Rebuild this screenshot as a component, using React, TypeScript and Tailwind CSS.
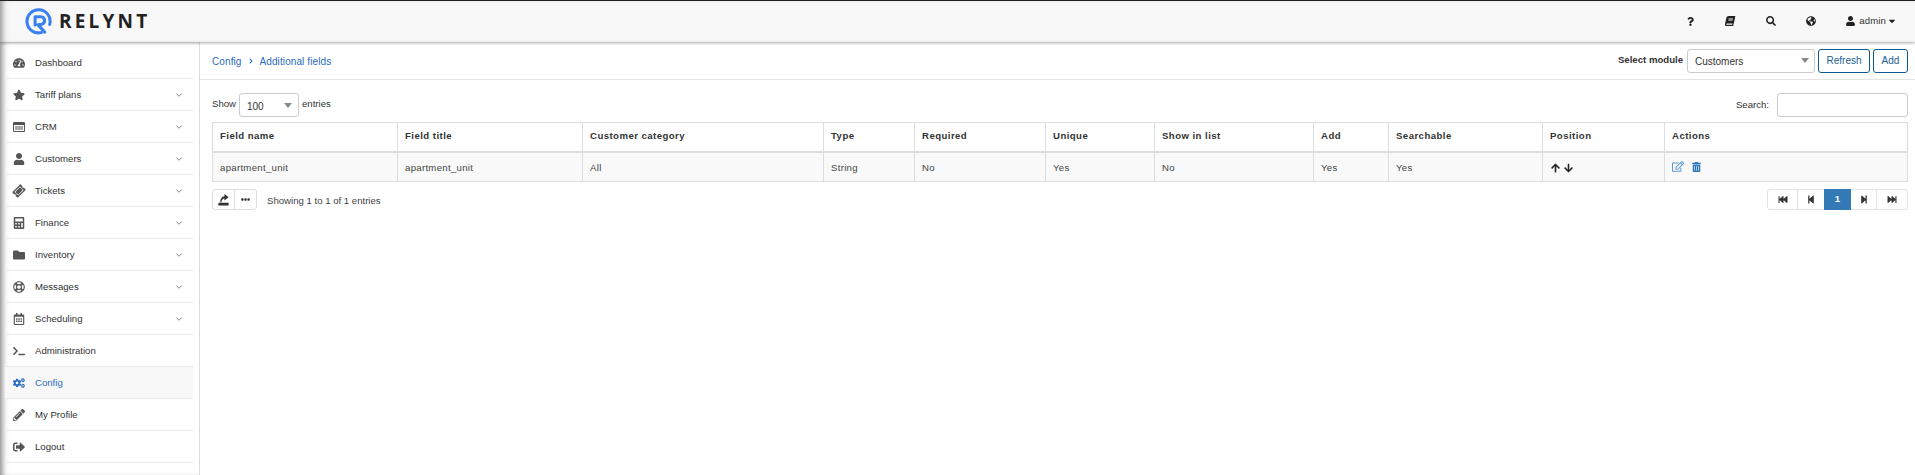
import React from "react";
import {
  FaTachometerAlt, FaStar, FaUser, FaTicketAlt, FaCalculator, FaFolder, FaRegLifeRing, FaRegCalendarAlt, FaTerminal,
  FaCogs, FaPencilAlt, FaSignOutAlt, FaQuestion, FaBook, FaSearch, FaGlobeAmericas, FaArrowUp, FaArrowDown,
  FaRegEdit, FaTrashAlt, FaFastBackward, FaStepBackward, FaStepForward, FaFastForward, FaEllipsisH, FaCaretDown, FaChevronRight,
} from "react-icons/fa";
import { LuChevronDown } from "react-icons/lu";

function Crm({ className }: { className?: string }) {
  return (
    <svg viewBox="0 0 24 20" className={className} fill="currentColor">
      <path fillRule="evenodd" d="M2 0h20a2 2 0 0 1 2 2v16a2 2 0 0 1-2 2H2a2 2 0 0 1-2-2V2a2 2 0 0 1 2-2Zm0 6v12h20V6H2Zm2 3h16v2H4V9Zm0 4h16v2H4v-2Z" />
    </svg>
  );
}

function Ticket({ className }: { className?: string }) {
  return <FaTicketAlt className={`${className} -rotate-45`} />;
}

function Logo() {
  return (
    <svg viewBox="0 0 28 28" className="w-[27px] h-[27px] shrink-0" fill="none" stroke="#3b82f0" strokeWidth="3.2">
      <path d="M17 25.4A12 12 0 1 1 25.6 17" strokeLinecap="round" />
      <path d="M10.5 17.5V9h6a4 4 0 0 1 1 7.8L13.5 17.5l7 7.5" strokeLinejoin="round" strokeLinecap="round" />
    </svg>
  );
}

function ExportIcon() {
  return (
    <svg viewBox="0 0 14 14" className="w-[13px] h-[13px] text-[#333]" fill="currentColor">
      <path d="M1.5 10.5h11v3h-11zM3.5 10c0-4 1.8-6.2 4.5-6.5V1l4.5 3.6L8 8V5.8C6 6 5 7.5 4.7 10z" />
    </svg>
  );
}

const menu: { label: string; Icon: any; chevron?: boolean; active?: boolean }[] = [
  { label: "Dashboard", Icon: FaTachometerAlt },
  { label: "Tariff plans", Icon: FaStar, chevron: true },
  { label: "CRM", Icon: Crm, chevron: true },
  { label: "Customers", Icon: FaUser, chevron: true },
  { label: "Tickets", Icon: Ticket, chevron: true },
  { label: "Finance", Icon: FaCalculator, chevron: true },
  { label: "Inventory", Icon: FaFolder, chevron: true },
  { label: "Messages", Icon: FaRegLifeRing, chevron: true },
  { label: "Scheduling", Icon: FaRegCalendarAlt, chevron: true },
  { label: "Administration", Icon: FaTerminal },
  { label: "Config", Icon: FaCogs, active: true },
  { label: "My Profile", Icon: FaPencilAlt },
  { label: "Logout", Icon: FaSignOutAlt },
];

const columns: { title: string; width: string; value: string }[] = [
  { title: "Field name", width: "w-[185px]", value: "apartment_unit" },
  { title: "Field title", width: "w-[185px]", value: "apartment_unit" },
  { title: "Customer category", width: "w-[241px]", value: "All" },
  { title: "Type", width: "w-[91px]", value: "String" },
  { title: "Required", width: "w-[131px]", value: "No" },
  { title: "Unique", width: "w-[109px]", value: "Yes" },
  { title: "Show in list", width: "w-[159px]", value: "No" },
  { title: "Add", width: "w-[75px]", value: "Yes" },
  { title: "Searchable", width: "w-[154px]", value: "Yes" },
];

function Caret() {
  return <span className="w-0 h-0 border-x-[4px] border-x-transparent border-t-[5px] border-t-[#888]" />;
}

export default function App() {
  return (
    <div className="h-[475px] w-full overflow-hidden bg-white flex flex-col text-[#333] font-['Liberation_Sans',Arial,sans-serif] text-[9.6px] border-t border-t-[#222]">
      <header className="relative z-10 h-[41px] shrink-0 flex items-center justify-between bg-[#f8f8f8] shadow-[inset_6px_0_6px_-4px_rgba(0,0,0,0.45),0_1px_3px_rgba(0,0,0,0.35)]">
        <div className="flex items-center ml-[25px] gap-[7px]">
          <Logo />
          <span className="font-['Open_Sans',sans-serif] font-bold text-[19px] leading-none tracking-[3.2px] text-[#222]">RELYNT</span>
        </div>
        <div className="flex items-center text-[#222]">
          <FaQuestion className="w-[7px] h-[9px] mr-[31px]" />
          <FaBook className="w-[10px] h-[10px] mr-[31px] -skew-x-12" />
          <FaSearch className="w-[10px] h-[10px] mr-[30px]" />
          <FaGlobeAmericas className="w-[10px] h-[10px] mr-[30px]" />
          <FaUser className="w-[9px] h-[10px] mr-[4px]" />
          <span className="text-[#333] tracking-[0.1px]">admin</span>
          <FaCaretDown className="w-[10px] h-[10px] ml-px mr-[18px]" />
        </div>
      </header>

      <div className="flex flex-1 min-h-0">
        <aside className="w-[200px] shrink-0 border-r border-r-[#ddd] pl-[5px] pr-[6px] pt-[5px] shadow-[inset_6px_0_6px_-4px_rgba(0,0,0,0.5)]">
          {menu.map(({ label, Icon, chevron, active }) => (
            <div
              key={label}
              className={`h-[32px] flex items-center border-b border-b-[#eaeaea] ${active ? "bg-[#f8f8f8] text-[#2a6bc2]" : "text-[#333]"}`}
            >
              <span className={`w-[30px] flex justify-center pl-[2px] pr-[5px] ${active ? "text-[#2a6bc2]" : "text-[#555]"}`}>
                <Icon className="w-[12px] h-[12px]" />
              </span>
              <span className="flex-1 text-[9.6px] leading-none">{label}</span>
              {chevron && <LuChevronDown className="w-[10px] h-[10px] text-[#777] mr-[9px]" />}
            </div>
          ))}
        </aside>

        <main className="flex-1 min-w-0 flex flex-col">
          <div className="h-[38px] shrink-0 flex items-center justify-between border-b border-b-[#e3e3e3] pl-[12px] pr-[7px]">
            <div className="flex items-center text-[#2a6bc2] text-[10px] tracking-[0.1px] pt-px">
              <span>Config</span>
              <FaChevronRight className="w-[6px] h-[6px] mx-[6px]" />
              <span>Additional fields</span>
            </div>
            <div className="flex items-center">
              <span className="font-bold text-[#333] mr-[4px]">Select module</span>
              <div className="w-[128px] h-[24px] flex items-center justify-between border border-[#ccc] rounded-[3px] pl-[7px] pr-[5px] text-[10px]">
                <span className="pt-px">Customers</span>
                <Caret />
              </div>
              <button className="ml-[3px] w-[52px] h-[24px] border border-[#0f5a92] rounded-[3px] text-[#1c5f91] text-[10px]">Refresh</button>
              <button className="ml-[3px] w-[35px] h-[24px] border border-[#0f5a92] rounded-[3px] text-[#1c5f91] text-[10px]">Add</button>
            </div>
          </div>

          <div className="pl-[12px] pr-[7px] pt-[13px]">
            <div className="h-[24px] flex items-center justify-between">
              <div className="flex items-center">
                <span className="-mt-[2px]">Show</span>
                <div className="w-[60px] h-[24px] mx-[3px] flex items-center justify-between border border-[#ccc] rounded-[3px] pl-[7px] pr-[6px] text-[10px]">
                  <span className="pt-[2px]">100</span>
                  <Caret />
                </div>
                <span className="-mt-[2px]">entries</span>
              </div>
              <div className="flex items-center">
                <span className="mr-[8px]">Search:</span>
                <input className="w-[131px] h-[24px] border border-[#ccc] rounded-[3px] outline-none" />
              </div>
            </div>

            <table className="mt-[5px] w-full table-fixed border-collapse">
              <thead>
                <tr className="h-[29px]">
                  {columns.map((c) => (
                    <th key={c.title} className={`${c.width} border border-[#ddd] border-b-[2px] px-[7px] pb-[2px] text-left font-bold text-[9.6px] tracking-[0.45px] text-[#333]`}>{c.title}</th>
                  ))}
                  <th className="w-[122px] border border-[#ddd] border-b-[2px] px-[7px] pb-[2px] text-left font-bold text-[9.6px] tracking-[0.45px]">Position</th>
                  <th className="border border-[#ddd] border-b-[2px] px-[7px] pb-[2px] text-left font-bold text-[9.6px] tracking-[0.45px]">Actions</th>
                </tr>
              </thead>
              <tbody>
                <tr className="h-[30px] bg-[#f9f9f9]">
                  {columns.map((c) => (
                    <td key={c.title} className="border border-[#ddd] px-[7px] pt-[2px] text-[9.6px] tracking-[0.3px] text-[#444]">{c.value}</td>
                  ))}
                  <td className="border border-[#ddd] px-[7px] pt-[2px]">
                    <span className="flex items-center gap-[2px] text-[#222]">
                      <FaArrowUp className="w-[11px] h-[10px]" />
                      <FaArrowDown className="w-[11px] h-[10px]" />
                    </span>
                  </td>
                  <td className="border border-[#ddd] px-[7px]">
                    <span className="flex items-center gap-[8px]">
                      <FaRegEdit className="w-[12px] h-[11px] text-[#5b9bd5]" />
                      <FaTrashAlt className="w-[9px] h-[10px] text-[#2a77b8]" />
                    </span>
                  </td>
                </tr>
              </tbody>
            </table>

            <div className="mt-[7px] flex items-center justify-between">
              <div className="flex items-center">
                <div className="flex h-[21px] border border-[#ddd] rounded-[3px]">
                  <span className="w-[22px] flex items-center justify-center border-r border-r-[#ddd]"><ExportIcon /></span>
                  <span className="w-[21px] flex items-center justify-center text-[#333]"><FaEllipsisH className="w-[9px] h-[9px]" /></span>
                </div>
                <span className="ml-[10px] pt-[3px] text-[9.6px] text-[#444]">Showing 1 to 1 of 1 entries</span>
              </div>
              <div className="flex h-[21px] border border-[#e2e2e2] rounded-[3px] text-[#333]">
                <span className="w-[30px] flex items-center justify-center border-r border-r-[#e2e2e2]"><FaFastBackward className="w-[10px] h-[9px]" /></span>
                <span className="w-[26px] flex items-center justify-center"><FaStepBackward className="w-[8px] h-[9px]" /></span>
                <span className="w-[27px] flex items-center justify-center bg-[#337ab7] text-white font-bold -my-px">1</span>
                <span className="w-[26px] flex items-center justify-center border-r border-r-[#e2e2e2]"><FaStepForward className="w-[8px] h-[9px]" /></span>
                <span className="flex-1 w-[30px] flex items-center justify-center"><FaFastForward className="w-[10px] h-[9px]" /></span>
              </div>
            </div>
          </div>
        </main>
      </div>
    </div>
  );
}
